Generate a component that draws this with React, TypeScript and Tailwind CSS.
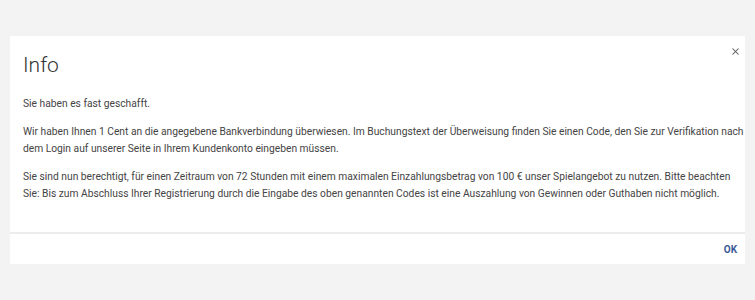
import { X } from 'lucide-react'

export default function App() {
  return (
    <div className="h-[300px] bg-[#f3f3f3] px-[10px] pt-[36px] font-['Roboto',sans-serif]">
      <div className="bg-white">
        {/* Kopf */}
        <div className="relative px-[13px] pt-[17px]">
          <h1 className="text-[21px] leading-[24px] font-light text-[#333]">Info</h1>
          <button className="absolute right-0 top-[6px] p-1 text-[#555]">
            <X size={11} strokeWidth={2.2} />
          </button>
        </div>

        {/* Inhalt */}
        <div className="pl-[13px] pr-0 pt-[18px] pb-[30px] text-[10.25px] leading-[17px] text-[#444] flex flex-col gap-[11px]">
          <p>Sie haben es fast geschafft.</p>
          <p>
            Wir haben Ihnen 1 Cent an die angegebene Bankverbindung überwiesen. Im Buchungstext der Überweisung finden Sie einen Code, den Sie zur Verifikation nach dem Login auf unserer Seite in Ihrem Kundenkonto eingeben müssen.
          </p>
          <p className="pr-[8px]">
            Sie sind nun berechtigt, für einen Zeitraum von 72 Stunden mit einem maximalen Einzahlungsbetrag von 100 € unser Spielangebot zu nutzen. Bitte beachten Sie: Bis zum Abschluss Ihrer Registrierung durch die Eingabe des oben genannten Codes ist eine Auszahlung von Gewinnen oder Guthaben nicht möglich.
          </p>
        </div>

        {/* Fuß */}
        <div className="border-t-2 border-[#ececec] h-[32px] flex items-center justify-end px-[4px]">
          <button className="text-[10px] font-bold text-[#3b5b98] px-1">OK</button>
        </div>
      </div>
    </div>
  )
}
